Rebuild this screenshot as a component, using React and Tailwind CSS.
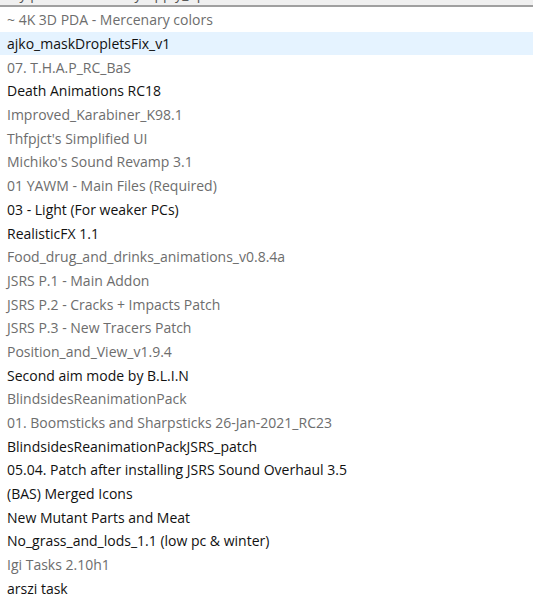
const ITEMS = [
  { name: "~ 4K 3D PDA - Mercenary colors", active: false },
  { name: "ajko_maskDropletsFix_v1", active: true, hover: true },
  { name: "07. T.H.A.P_RC_BaS", active: false },
  { name: "Death Animations RC18", active: true },
  { name: "Improved_Karabiner_K98.1", active: false },
  { name: "Thfpjct's Simplified UI", active: false },
  { name: "Michiko's Sound Revamp 3.1", active: false },
  { name: "01 YAWM - Main Files (Required)", active: false },
  { name: "03 - Light (For weaker PCs)", active: true },
  { name: "RealisticFX 1.1", active: true },
  { name: "Food_drug_and_drinks_animations_v0.8.4a", active: false },
  { name: "JSRS P.1 - Main Addon", active: false },
  { name: "JSRS P.2 - Cracks + Impacts Patch", active: false },
  { name: "JSRS P.3 - New Tracers Patch", active: false },
  { name: "Position_and_View_v1.9.4", active: false },
  { name: "Second aim mode by B.L.I.N", active: true },
  { name: "BlindsidesReanimationPack", active: false },
  { name: "01. Boomsticks and Sharpsticks 26-Jan-2021_RC23", active: false },
  { name: "BlindsidesReanimationPackJSRS_patch", active: true },
  { name: "05.04. Patch after installing JSRS Sound Overhaul 3.5", active: true },
  { name: "(BAS) Merged Icons", active: true },
  { name: "New Mutant Parts and Meat", active: true },
  { name: "No_grass_and_lods_1.1 (low pc & winter)", active: true },
  { name: "Igi Tasks 2.10h1", active: false },
  { name: "arszi task", active: true },
];

export default function App() {
  return (
    <div className="flex h-[614px] w-[533px] flex-col overflow-hidden bg-white font-['Open_Sans',sans-serif] text-[14px]">
      <div className="h-[5px] overflow-hidden border-b-2 border-[#a0a0a0] bg-[#f0f0f0] box-content">
        <div className="-mt-[14px] px-[7px] leading-[16px] text-[#555]">
          My profiles\Anomaly\apply_updates.txt
        </div>
      </div>
      <ul className="flex flex-col pt-[1px]">
        {ITEMS.map((item) => (
          <li
            key={item.name}
            className={
              "flex h-[23.7px] items-center whitespace-nowrap px-[7px] " +
              (item.hover ? "bg-[#e5f3ff] " : "") +
              (item.active ? "text-[#111]" : "text-[#6d6d6d]")
            }
          >
            {item.name}
          </li>
        ))}
      </ul>
    </div>
  );
}
